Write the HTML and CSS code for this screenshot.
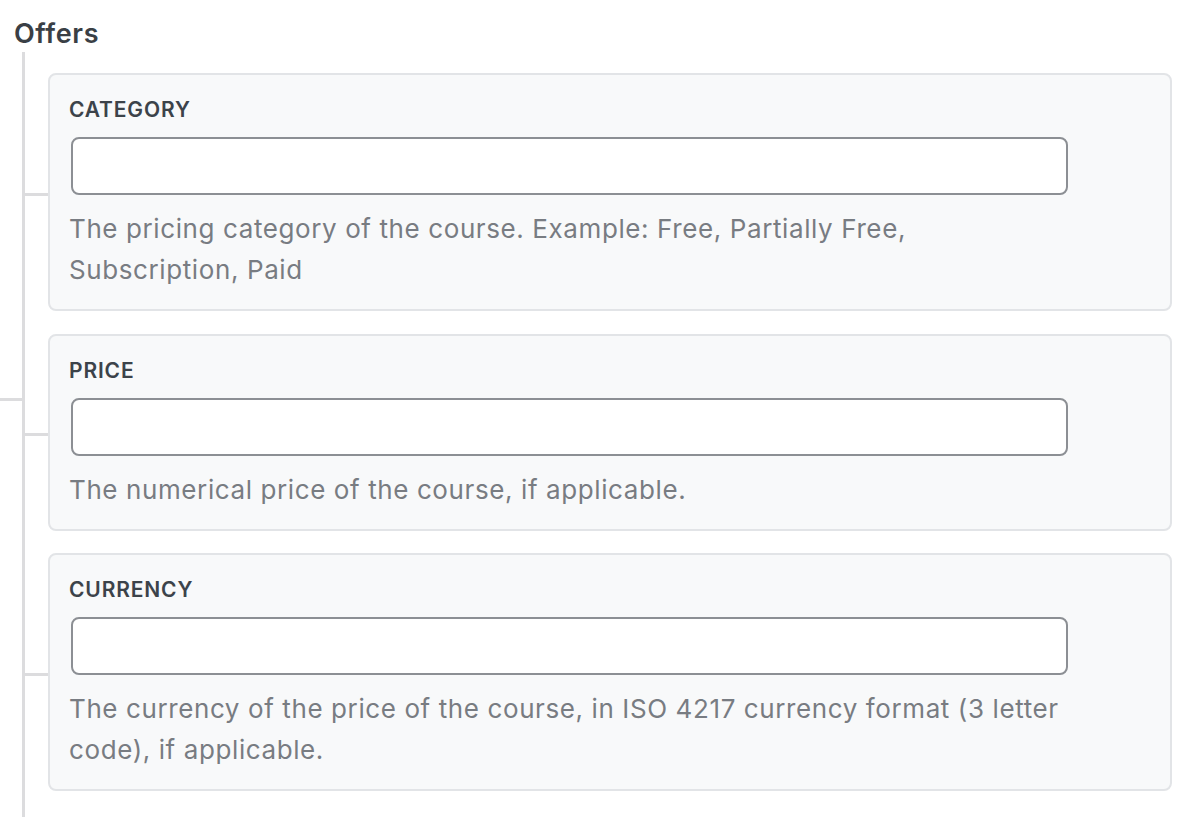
FILE: index.html
```html
<!DOCTYPE html>
<html lang="en">
<head>
<meta charset="utf-8">
<title>Offers</title>
<link rel="stylesheet" href="styles.css">
</head>
<body>
<div class="panel">
  <h2 class="panel-title">Offers</h2>
  <div class="tree">
    <span class="tree-parent-branch"></span>
    <div class="field-card">
      <label class="field-label" for="f-category">Category</label>
      <input class="field-input" id="f-category" type="text">
      <p class="field-help">The pricing category of the course. Example: Free, Partially Free,<br>Subscription, Paid</p>
    </div>
    <div class="field-card">
      <label class="field-label" for="f-price">Price</label>
      <input class="field-input" id="f-price" type="text">
      <p class="field-help">The numerical price of the course, if applicable.</p>
    </div>
    <div class="field-card">
      <label class="field-label" for="f-currency">Currency</label>
      <input class="field-input" id="f-currency" type="text">
      <p class="field-help">The currency of the price of the course, in ISO 4217 currency format (3 letter<br>code), if applicable.</p>
    </div>
  </div>
</div>
</body>
</html>
```
FILE: styles.css
```css
* { box-sizing: border-box; }

html, body {
  margin: 0;
  padding: 0;
  background: #ffffff;
}

body {
  font-family: Inter, "Noto Sans", "Liberation Sans", sans-serif;
  color: #3c434a;
}

.panel {
  padding: 18px 22px 0 14px;
}

.panel-title {
  margin: 0;
  font-size: 27px;
  line-height: 31px;
  font-weight: 600;
  letter-spacing: 0.6px;
  color: #3a3f45;
}

.tree {
  position: relative;
  margin: 3px 0 0 8px;
  padding: 21px 0 26px 23px;
  border-left: 3px solid #dcdcde;
  display: flex;
  flex-direction: column;
  gap: 22.5px;
}

.tree-parent-branch {
  position: absolute;
  left: -25px;
  top: 346px;
  width: 22px;
  height: 3px;
  background: #dcdcde;
}

.field-card {
  position: relative;
  background: #f8f9fa;
  border: 2px solid #e2e4e7;
  border-radius: 8px;
  padding: 24px 20px 19px 19px;
}

.field-card::before {
  content: "";
  position: absolute;
  left: -25px;
  top: calc(50% + 1px);
  width: 23px;
  height: 3px;
  background: #dcdcde;
}

.field-label {
  display: block;
  font-size: 21px;
  line-height: 22px;
  font-weight: 600;
  text-transform: uppercase;
  letter-spacing: 0.85px;
  color: #3c434a;
}

.field-input {
  display: block;
  margin: 16px 0 0 2px;
  width: 997px;
  height: 58px;
  border: 2px solid #8c8f94;
  border-radius: 8px;
  background: #ffffff;
  font: inherit;
  font-size: 26px;
  padding: 0 14px;
  outline: none;
}

.field-help {
  margin: 13px 0 0;
  font-size: 26px;
  line-height: 41px;
  letter-spacing: 0.6px;
  color: #787c82;
}
```
